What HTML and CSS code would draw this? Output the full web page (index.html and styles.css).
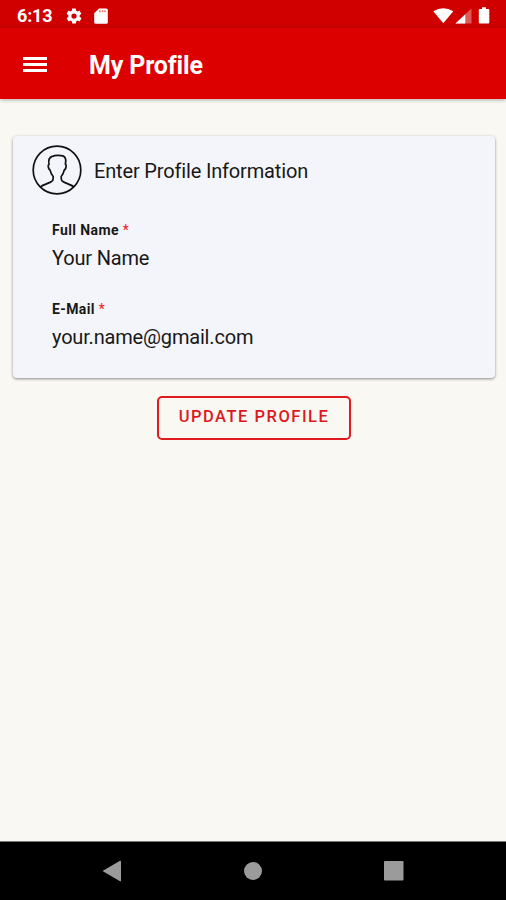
FILE: index.html
```
<!DOCTYPE html>
<html lang="en">
	<head>
		<meta charset="utf-8">
		<title>My Profile</title>
		<link rel="stylesheet" href="styles.css">
	</head>
	<body>
		<div class="screen">
			<div class="status">
				<span class="time">6:13</span>
				<svg class="gear" width="18" height="18" viewBox="0 0 24 24"><path fill="#fff" fill-rule="evenodd" d="M19.4 13c0-.3.1-.6.1-1s0-.7-.1-1l2.1-1.6c.2-.2.3-.4.1-.7l-2-3.4c-.1-.2-.4-.3-.6-.2l-2.5 1c-.5-.4-1.1-.7-1.7-1l-.4-2.6c0-.3-.2-.5-.4-.5h-4c-.3 0-.5.2-.5.4l-.4 2.7c-.6.2-1.1.6-1.7 1l-2.4-1c-.3-.1-.5 0-.7.2l-2 3.4c-.1.2 0 .5.2.7L4.6 11c-.1.3-.1.7-.1 1s0 .7.1 1l-2.1 1.6c-.2.2-.3.4-.1.7l2 3.4c.1.2.4.3.6.2l2.5-1c.5.4 1.1.7 1.7 1l.4 2.6c0 .3.2.5.5.5h4c.2 0 .5-.2.5-.5l.4-2.6c.6-.2 1.1-.6 1.7-1l2.4 1c.3.1.5 0 .7-.2l2-3.4c.1-.2 0-.5-.1-.7zM12 15.500a3.500 3.500 0 1 1 0-7 3.500 3.500 0 0 1 0 7z"/></svg>
				<svg class="sdcard" width="14" height="16" viewBox="0 0 14 16"><path fill="#fff" d="M5 .5h7.300q1.500 0 1.500 1.500v12.200q0 1.500-1.500 1.500H1.700q-1.500 0-1.500-1.500V5.300z"/><path fill="#d00000" fill-opacity=".6" d="M5.200 2.200h1.400v2H5.200zM7.800 2.200h1.400v2H7.800zM10.300 2.200h1.400v2h-1.400z"/></svg>
				<svg class="signals" width="58" height="18" viewBox="0 0 58 18">
					<path fill="#fff" d="M-.7 4.300Q9.300-1.600 19.300 4.300L9.300 16.200z"/>
					<path fill="#fff" fill-opacity=".35" d="M37.500 1.500v15H21.500z"/>
					<path fill="#fff" d="M31.300 7.300v9.200H21.500z"/>
					<path fill="#fff" d="M48 .3h4v1.800h2.300q1 0 1 1v12.400q0 1-1 1h-8.500q-1 0-1-1V3.100q0-1 1-1H48z"/>
				</svg>
			</div>
			<div class="toolbar">
				<div class="menu"><span></span><span></span><span></span></div>
				<h1>My Profile</h1>
			</div>
			<div class="content">
				<div class="card">
					<div class="card_title">
						<svg width="50" height="50" viewBox="0 0 50 50" fill="none" stroke="#111" stroke-width="1.700" stroke-linejoin="round">
							<circle cx="25" cy="25" r="23.800"/>
							<path d="M8.500 41.800c2-1.700 6-2.900 9.500-4.400 3-1.300 3.200-2.200 3.200-5.900-1.600-1.600-2.600-3.800-3.100-6.400-1-.4-1.700-2-1.900-4 0-1 .3-1.500.9-1.700-1-4.400.1-7 3-8 3.300-1.500 8.600-1.300 10.800-.5 3.600 1.300 3.200 5.200 2.500 8.500.7.300.9 1 .7 2-.2 2-.9 3.400-1.900 3.700-.5 2.600-1.500 4.800-3 6.400 0 3.700.2 4.600 3.200 5.900 3.400 1.500 7.300 2.700 9.300 4.400"/>
						</svg>
						<h2>Enter Profile Information</h2>
					</div>
					<div class="field">
						<label>Full Name <em>*</em></label>
						<p>Your Name</p>
					</div>
					<div class="field">
						<label>E-Mail <em>*</em></label>
						<p>your.name@gmail.com</p>
					</div>
				</div>
				<button class="update">UPDATE PROFILE</button>
			</div>
			<div class="navbar">
				<svg width="20" height="22" viewBox="0 0 20 22"><path fill="#9b9b9b" d="M.5 11 18 .8q1-.5 1 .5v19.400q0 1-1 .5z"/></svg>
				<svg width="18" height="18" viewBox="0 0 18 18"><circle cx="9" cy="9" r="9" fill="#9b9b9b"/></svg>
				<svg width="20" height="20" viewBox="0 0 20 20"><rect width="19.500" height="19.500" rx="1" fill="#9b9b9b"/></svg>
			</div>
		</div>
	</body>
</html>
```
FILE: styles.css
```
*{
	margin: 0;
	padding: 0;
	box-sizing: border-box;
}
body{
	font-family: Roboto, sans-serif;
	color: #181818;
}
svg{
	display: block;
	overflow: visible;
}
.screen{
	height: 900px;
	display: flex;
	flex-direction: column;
	overflow: hidden;
	background: #f9f8f3;
}

/* top bars */
.status{
	height: 28px;
	padding: 3px 14px 0 17px;
	display: flex;
	align-items: center;
	background: #d00000;
	color: #fff;
}
.time{
	width: 48px;
	font-size: 18px;
	line-height: 26px;
	font-weight: 700;
	letter-spacing: -0.2px;
}
.sdcard{
	margin-left: 11px;
}
.signals{
	margin-left: auto;
}
.toolbar{
	height: 71px;
	padding: 2px 0 0 23px;
	display: flex;
	align-items: center;
	background: #dd0000;
	box-shadow: 0 1px 4px rgba(0,0,0,0.3);
	color: #fff;
}
.menu{
	width: 66px;
}
.menu span{
	display: block;
	width: 24px;
	height: 3px;
	background: #fff;
}
.menu span + span{
	margin-top: 3px;
}
.toolbar h1{
	padding-top: 2px;
	font-size: 25px;
	font-weight: 700;
	letter-spacing: -0.15px;
}

/* profile form */
.content{
	flex: 1;
	padding: 37px 11px 0 13px;
}
.card{
	height: 242px;
	padding: 9px 19px 0;
	background: #f4f5fa;
	border-radius: 4px;
	box-shadow: 0 1px 3px rgba(0,0,0,0.45);
}
.card_title{
	display: flex;
	align-items: center;
	gap: 12px;
}
.card_title h2{
	padding-top: 2px;
	font-size: 20px;
	font-weight: 400;
	letter-spacing: -0.16px;
}
.field{
	height: 79px;
	padding: 25px 0 0 20px;
}
.field label{
	display: block;
	font-size: 14px;
	line-height: 20px;
	font-weight: 700;
	letter-spacing: 0.4px;
}
.field em{
	font-style: normal;
	font-weight: 400;
	color: #f01820;
}
.field p{
	margin-top: 5px;
	font-size: 20px;
	line-height: 26px;
	letter-spacing: -0.18px;
}
.update{
	display: block;
	width: 194px;
	height: 44px;
	margin: 18px auto 0;
	padding-bottom: 3px;
	border: 2px solid #e21b1e;
	border-radius: 5px;
	background: none;
	color: #dc1a1e;
	font: 500 16.500px Roboto, sans-serif;
	letter-spacing: 1.500px;
}

.navbar{
	height: 59px;
	padding: 0 102px;
	display: flex;
	align-items: center;
	justify-content: space-between;
	background: #000;
	border-top: 1px solid #777;
}
```
